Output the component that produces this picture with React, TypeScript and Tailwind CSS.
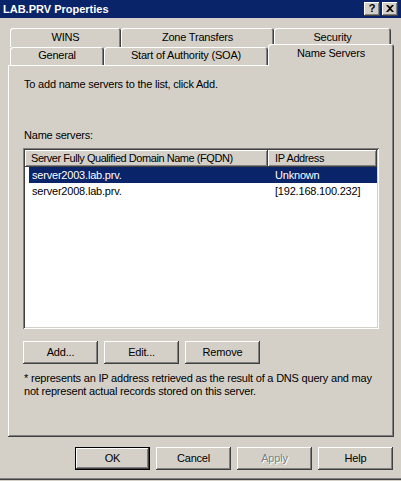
import React from "react";

const raised =
  "shadow-[inset_-1px_-1px_0_#404040,inset_1px_1px_0_#ffffff,inset_-2px_-2px_0_#808080]";
const sunken =
  "shadow-[inset_1px_1px_0_#808080,inset_-1px_-1px_0_#ffffff,inset_2px_2px_0_#404040,inset_-2px_-2px_0_#d4d0c8]";
const tabBevel =
  "shadow-[inset_1px_1px_0_#ffffff,inset_-1px_0_0_#404040,inset_-2px_0_0_#808080]";

function Tab({ label, w, selected }: { label: string; w: string; selected?: boolean }) {
  return (
    <div
      className={`${w} ${tabBevel} ${
        selected ? "h-[22px] -mb-px relative z-10 pb-[3px]" : "h-full pb-px"
      } rounded-t-[3px] bg-[#d4d0c8] flex items-center justify-center shrink-0`}
    >
      <span>{label}</span>
    </div>
  );
}

function Btn({ label, w = "w-[75px]", def, disabled }: { label: string; w?: string; def?: boolean; disabled?: boolean }) {
  return (
    <div
      className={`${w} h-[23px] bg-[#d4d0c8] flex items-center justify-center ${
        def
          ? "border border-black shadow-[inset_-1px_-1px_0_#404040,inset_1px_1px_0_#ffffff,inset_-2px_-2px_0_#808080]"
          : raised
      }`}
    >
      <span
        className={
          disabled ? "text-[#808080] [text-shadow:1px_1px_0_#ffffff]" : "text-black"
        }
      >
        {label}
      </span>
    </div>
  );
}

export default function App() {
  return (
    <div className="w-[401px] h-[481px] bg-[#d4d0c8] flex flex-col overflow-hidden text-[11px] leading-[13px] tracking-[-0.2px] text-black font-['Liberation_Sans',Arial,sans-serif]">
      {/* Title bar */}
      <div className="h-[18px] bg-[#0a246a] flex items-center justify-between pl-[3px] pr-[3px] shrink-0">
        <span className="text-white font-bold text-[11px] tracking-normal">LAB.PRV Properties</span>
        <div className="flex gap-[2px]">
          <div className={`w-[16px] h-[14px] bg-[#d4d0c8] ${raised} flex items-center justify-center`}>
            <span className="font-bold text-[11px] leading-none -mt-px">?</span>
          </div>
          <div className={`w-[16px] h-[14px] bg-[#d4d0c8] ${raised} flex items-center justify-center`}>
            <svg width="8" height="7" viewBox="0 0 8 7" className="-mt-px">
              <path d="M0 0h2l2 2 2-2h2L5 3.5 8 7H6L4 5 2 7H0l3-3.5z" fill="#000" />
            </svg>
          </div>
        </div>
      </div>

      <div className="pt-[10px] pl-[8px] pr-[7px] flex flex-col">
        {/* Tab row 1 */}
        <div className="flex pl-[2px] h-[19px]">
          <Tab label="WINS" w="w-[111px]" />
          <Tab label="Zone Transfers" w="w-[153px]" />
          <Tab label="Security" w="w-[117px]" />
        </div>
        {/* Tab row 2 */}
        <div className="flex pl-[2px] h-[18px] items-end">
          <Tab label="General" w="w-[94px]" />
          <Tab label="Start of Authority (SOA)" w="w-[164px]" />
          <Tab label="Name Servers" w="w-[126px]" selected />
        </div>
        {/* Panel */}
        <div className={`h-[372px] ${raised} px-[15px] pt-[13px] flex flex-col`}>
          <div className="pl-px">To add name servers to the list, click Add.</div>
          <div className="pl-px mt-[38px]">Name servers:</div>
          <div className={`mt-[6px] h-[181px] bg-white ${sunken} p-[2px] flex flex-col`}>
            <div className="flex h-[17px] shrink-0">
              <div className={`w-[243px] bg-[#d4d0c8] ${raised} pl-[6px] flex items-center tracking-[-0.45px] whitespace-nowrap`}>
                Server Fully Qualified Domain Name (FQDN)
              </div>
              <div className={`w-[109px] bg-[#d4d0c8] ${raised} pl-[7px] flex items-center tracking-[-0.4px]`}>
                IP Address
              </div>
            </div>
            <div className="flex h-[16px] pl-[4px]">
              <div className="flex-1 flex bg-[#0a246a] text-white items-center">
                <div className="w-[239px] pl-[3px]">server2003.lab.prv.</div>
                <div className="pl-[7px]">Unknown</div>
              </div>
            </div>
            <div className="flex h-[16px] pl-[4px]">
              <div className="flex-1 flex items-center">
                <div className="w-[239px] pl-[3px]">server2008.lab.prv.</div>
                <div className="pl-[7px]">[192.168.100.232]</div>
              </div>
            </div>
          </div>
          <div className="mt-[12px] flex gap-[6px]">
            <Btn label="Add..." />
            <Btn label="Edit..." />
            <Btn label="Remove" />
          </div>
          <div className="mt-[8px] pl-px whitespace-nowrap">
            * represents an IP address retrieved as the result of a DNS query and may
            <br />
            not represent actual records stored on this server.
          </div>
        </div>
        {/* Bottom buttons */}
        <div className="mt-[10px] flex justify-end gap-[6px] pr-px">
          <Btn label="OK" def />
          <Btn label="Cancel" />
          <Btn label="Apply" disabled />
          <Btn label="Help" />
        </div>
      </div>
      <div className="mt-[8px] h-px bg-[#808080]" />
      <div className="h-px bg-[#404040]" />
    </div>
  );
}
